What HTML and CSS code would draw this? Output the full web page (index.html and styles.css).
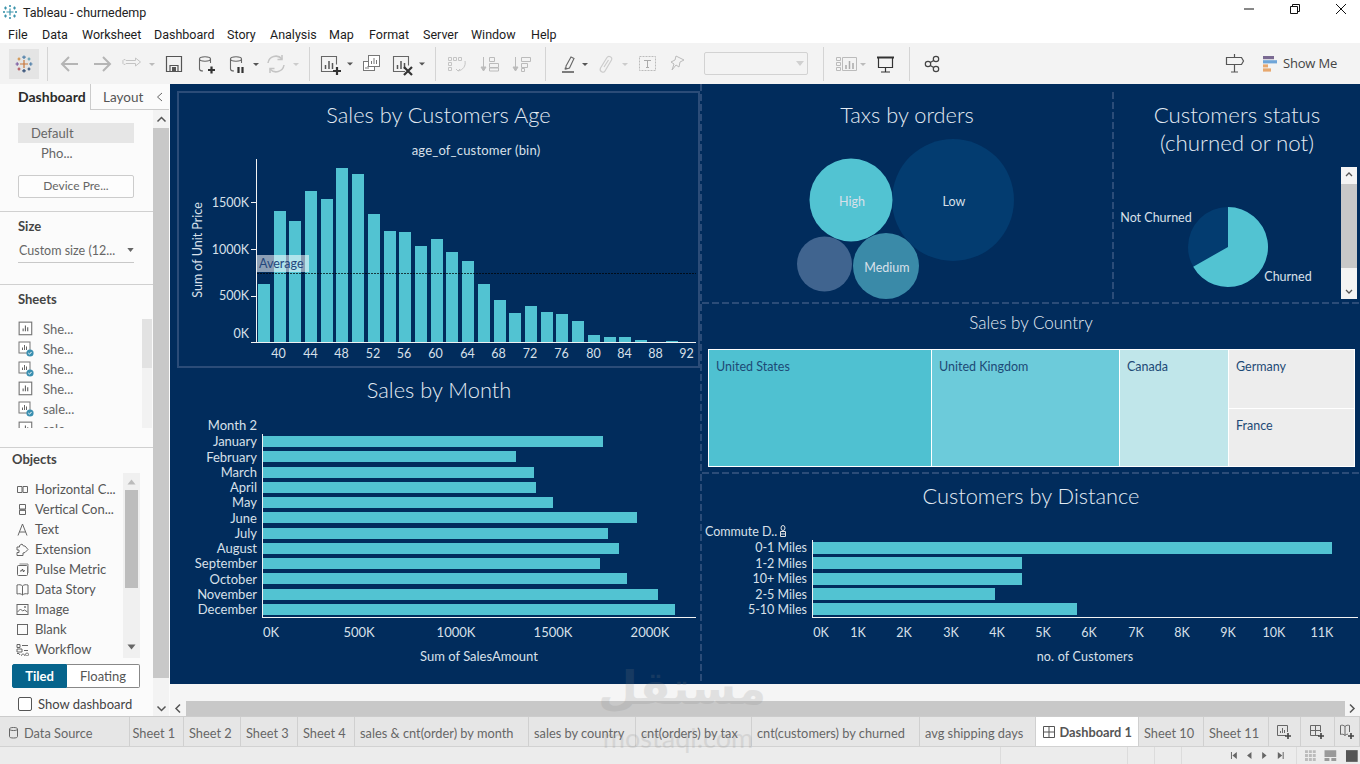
FILE: index.html
```html
<!DOCTYPE html>
<html lang="en">
<head>
<meta charset="utf-8">
<title>Tableau - churnedemp</title>
<link rel="stylesheet" href="styles.css">
</head>
<body>
<svg class="sprite" width="0" height="0">
  <defs>
    <symbol id="sheet" viewBox="0 0 14 14"><rect x="1" y="1" width="11" height="11" fill="#fff" stroke="#777"/><path d="M4.5 9V6.5M6.5 9V4M8.5 9V5.5" stroke="#666"/></symbol>
    <symbol id="sheetok" viewBox="0 0 16 16"><rect x="1" y="1" width="11" height="11" fill="#fff" stroke="#777"/><path d="M4.5 9V6.5M6.5 9V4M8.5 9V5.5" stroke="#666"/><circle cx="12" cy="12" r="3.6" fill="#3a8fb0"/><path d="M10.3 12l1.2 1.2 2.1-2.3" fill="none" stroke="#fff"/></symbol>
    <symbol id="car" viewBox="0 0 8 5"><path d="M0 0h8L4 5z" fill="currentColor"/></symbol>
  </defs>
</svg>

<header class="titlebar">
  <svg class="appicon" width="14" height="14" viewBox="0 0 14 14"><g stroke="#3a93ab" stroke-width="1.2" fill="none"><path d="M7 3.5v7M3.5 7h7"/><path d="M2.5 1.5v3M1 3h3M11.5 1.5v3M10 3h3M2.5 9.5v3M1 11h3M11.5 9.5v3M10 11h3"/><path d="M7 0v2M6 1h2M7 12v2M6 13h2M0 7h2M1 6v2M12 7h2M13 6v2"/></g></svg>
  <span class="apptitle">Tableau - churnedemp</span>
  <div class="winctl">
    <svg width="12" height="12" viewBox="0 0 12 12"><path d="M1 6h10" stroke="#111"/></svg>
    <svg width="12" height="12" viewBox="0 0 12 12"><path d="M1.5 3.5h7v7h-7zM3.5 3V1.5h7v7H9" fill="none" stroke="#111"/></svg>
    <svg width="12" height="12" viewBox="0 0 12 12"><path d="M1 1l10 10M11 1L1 11" stroke="#111"/></svg>
  </div>
</header>

<nav class="menubar">
  <span>File</span><span>Data</span><span>Worksheet</span><span>Dashboard</span><span>Story</span><span>Analysis</span><span>Map</span><span>Format</span><span>Server</span><span>Window</span><span>Help</span>
</nav>

<div class="toolbar">
  <div class="logobox">
    <svg width="18" height="18" viewBox="0 0 18 18" fill="none" stroke-width="1.2"><path d="M9 5v8M5 9h8" stroke="#c8763a"/><path d="M9 0.5v3.5M7.2 2.2h3.6" stroke="#4d7ea8"/><path d="M9 14v3.5M7.2 15.800h3.6" stroke="#2d4a73"/><path d="M0.500 9h3.500M2.200 7.200v3.600" stroke="#7a5aa0"/><path d="M14 9h3.5M15.800 7.200v3.600" stroke="#4d7ea8"/><path d="M4 2.500v3M2.500 4h3" stroke="#d08a3c"/><path d="M14 2.500v3M12.500 4h3" stroke="#5b9bb0"/><path d="M4 12.500v3M2.500 14h3" stroke="#b0474f"/><path d="M14 12.500v3M12.500 14h3" stroke="#2d4a73"/></svg>
  </div>
  <i class="sep first"></i>
  <svg class="tools" width="261" height="41" viewBox="48 43 261 41">
    <g fill="none" stroke="#b5b5b5" stroke-width="2">
      <path d="M78 64H63M69 57l-7 7 7 7"/><path d="M94 64h15M103 57l7 7-7 7"/>
    </g>
    <path d="M126 60.500h9.500V58l5 4-5 4v-2.500H126a1.500 1.500 0 0 1 -3 -1.500 1.500 1.500 0 0 1 3 -1.500z" fill="none" stroke="#c4c4c4"/>
    <path d="M149 63h6l-3 3z" fill="#bbb"/>
    <g fill="none" stroke="#555" stroke-width="1.200">
      <path d="M166.500 56.500h15v15h-15z"/><path d="M170 71.500v-6h8v6"/>
    </g>
    <rect x="172" y="67" width="4" height="4" fill="#555"/>
    <g fill="none" stroke="#666" stroke-width="1.100">
      <ellipse cx="205" cy="59" rx="5.500" ry="2.200"/><path d="M199.500 59v10c0 1 1.500 2 3.500 2M210.500 59v4"/>
      <ellipse cx="236" cy="59" rx="5.500" ry="2.200"/><path d="M230.500 59v10c0 1 1.500 2 3.500 2M241.500 59v4"/>
    </g>
    <path d="M208 70h7M211.500 66.500v7" stroke="#333" stroke-width="2.200"/>
    <path d="M238.500 67v6M242.500 67v6" stroke="#333" stroke-width="2.200"/>
    <path d="M253 63h6l-3 3z" fill="#555"/>
    <g fill="none" stroke="#c4c4c4" stroke-width="1.500"><path d="M268 63a8 8 0 0 1 14-4M284 65a8 8 0 0 1-14 4"/><path d="M282 55v4.500h-4.500M270 73v-4.500h4.500"/></g>
    <path d="M293 63h6l-3 3z" fill="#ccc"/>
  </svg>
  <i class="sep"></i>
  <svg class="tools" width="125" height="41" viewBox="310 43 125 41">
    <g fill="none" stroke="#666" stroke-width="1.100"><path d="M336 71.500h-14.500v-15h15v8"/></g>
    <path d="M325.500 69v-4M329 69v-8M332.500 69v-6" stroke="#555" stroke-width="1.500"/>
    <path d="M333 71h8M337 67v8" stroke="#333" stroke-width="2.200"/>
    <path d="M347 62.500h6l-3 3z" fill="#555"/>
    <g fill="#fff" stroke="#777"><rect x="363.500" y="61.500" width="11" height="9"/><rect x="368.500" y="55.500" width="11" height="11"/></g>
    <path d="M371.500 64v-3M374 64v-6M376.500 64v-4M366 69v-2M368 69v-3" stroke="#777"/>
    <g fill="none" stroke="#666" stroke-width="1.100"><path d="M405 71.500h-11.500v-15h15v9"/></g>
    <path d="M397.500 69v-4M401 69v-8M404.500 69v-6" stroke="#555" stroke-width="1.500"/>
    <path d="M404 67l8 8M412 67l-8 8" stroke="#333" stroke-width="2.200"/>
    <path d="M419 62.500h6l-3 3z" fill="#555"/>
  </svg>
  <i class="sep"></i>
  <svg class="tools" width="109" height="41" viewBox="436 43 109 41">
    <g fill="none" stroke="#c4c4c4">
      <path d="M448.500 57.500h3v3h-3zM453.500 57.500h3v3h-3zM458.500 57.500h3v3h-3zM448.500 62.500h3v3h-3zM448.500 67.500h3v3h-3z"/><path d="M465 61c1 5-2 9-7 10M456 69l2 2 2-2"/>
    </g>
    <g fill="none" stroke="#bbb"><path d="M483.500 57v13"/><path d="M489.500 57.500h5v4h-5zM489.500 63.500h9v4h-9z"/><path d="M489.500 68h9v3h-9z"/><path d="M481 67l2.500 4 2.500-4z" fill="#bbb"/></g>
    <g fill="none" stroke="#bbb"><path d="M515.500 57v13"/><path d="M521.500 57.500h9v4h-9zM521.500 63.500h6v4h-6zM521.500 68.500h3v3h-3z"/><path d="M513 67l2.500 4 2.500-4z" fill="#bbb"/></g>
  </svg>
  <i class="sep"></i>
  <svg class="tools" width="148" height="41" viewBox="546 43 148 41">
    <path d="M562 72h12" stroke="#555" stroke-width="1.500"/>
    <path d="M566 66l5-9 3 1.500-4.500 9.500-3.500 1zM565 69.500l.5-2" fill="none" stroke="#666" stroke-width="1.100"/>
    <path d="M582 63h6l-3 3z" fill="#555"/>
    <path d="M600.500 68L607 57.500c1.500-2.500 6-.5 4.500 2.500L605 71c-1.500 2.500-6 .5-4.500-3zM604 67l4.500-7" fill="none" stroke="#ccc" stroke-width="1.200"/>
    <path d="M622 63h6l-3 3z" fill="#ccc"/>
    <rect x="639.500" y="56.500" width="16" height="14" fill="none" stroke="#bbb" stroke-dasharray="2 1"/>
    <path d="M644 60.500h7M647.500 60.500v7M646 67.500h3" fill="none" stroke="#aaa"/>
    <path d="M676 56l8 4-4 2-1 5-3-2-4 5 2-6-3-2 4-2z" fill="none" stroke="#bbb"/>
  </svg>
  <div class="fieldbox"><svg width="8" height="5"><use href="#car"/></svg></div>
  <i class="sep"></i>
  <svg class="tools" width="85" height="41" viewBox="824 43 85 41">
    <g fill="none" stroke="#bbb"><path d="M836.500 57.500h4v3h-4zM836.500 62.500h4v3h-4zM836.500 67.500h4v3h-4zM842.500 57.500h14v13h-14z"/></g>
    <path d="M846 69v-4M849.500 69v-8M853 69v-6" stroke="#aaa" stroke-width="1.500"/>
    <path d="M860 63h6l-3 3z" fill="#bbb"/>
    <path d="M877 57.500h17" stroke="#333" stroke-width="2"/>
    <path d="M878.500 58v9.500h14V58M885.500 67.500V72M881 72h9" fill="none" stroke="#333" stroke-width="1.200"/>
  </svg>
  <i class="sep"></i>
  <svg class="tools" width="40" height="41" viewBox="910 43 40 41">
    <g fill="none" stroke="#444" stroke-width="1.200"><circle cx="936" cy="59" r="2.700"/><circle cx="936" cy="69" r="2.700"/><circle cx="928" cy="64" r="2.700"/><path d="M930.300 62.600l3.400-2.200M930.300 65.400l3.400 2.200"/></g>
  </svg>
  <div class="tool-right">
    <svg width="20" height="20" viewBox="0 0 20 20"><path d="M1.500 3.500h15l2 3.500-2 3.500h-15zM9.500 0v3.500M9.500 10.500V18M6 18h7" fill="none" stroke="#555" stroke-width="1.200"/></svg>
    <svg class="showme-ic" width="14" height="16" viewBox="0 0 14 16"><rect width="11" height="3.200" fill="#7a6a92"/><rect y="4.200" width="14" height="3.200" fill="#6fa5d8"/><rect y="8.400" width="5" height="3" fill="#e8a86e"/><rect y="12.400" width="8" height="3.200" fill="#e8a86e"/></svg>
    <span class="showme">Show Me</span>
  </div>
</div>

<main class="main">
  <aside class="side">
    <div class="side-tabs">
      <div class="stab on">Dashboard</div>
      <div class="stab lay"><span>Layout</span><svg width="7" height="10" viewBox="0 0 7 10"><path d="M6 1L1.500 5 6 9" fill="none" stroke="#666"/></svg></div>
    </div>
    <div class="side-body">
      <div class="side-panel">
        <section class="sec device">
          <div class="dev sel">Default</div>
          <div class="dev sub">Pho...</div>
          <div class="devbtn">Device Pre...</div>
        </section>
        <section class="sec size">
          <h3>Size</h3>
          <div class="sizesel"><span>Custom size (12...</span><svg width="7" height="4"><use href="#car"/></svg></div>
        </section>
        <section class="sec sheets">
          <h3>Sheets</h3>
          <div class="listwrap sheetlist">
            <ul class="items">
              <li><svg width="16" height="16"><use href="#sheet"/></svg><span>She...</span></li>
              <li><svg width="16" height="16"><use href="#sheetok"/></svg><span>She...</span></li>
              <li><svg width="16" height="16"><use href="#sheetok"/></svg><span>She...</span></li>
              <li><svg width="16" height="16"><use href="#sheet"/></svg><span>She...</span></li>
              <li><svg width="16" height="16"><use href="#sheetok"/></svg><span>sale...</span></li>
              <li><svg width="16" height="16"><use href="#sheet"/></svg><span>sale...</span></li>
            </ul>
            <div class="miniscroll"><div class="minithumb"></div></div>
          </div>
        </section>
        <section class="objects">
          <h3>Objects</h3>
          <div class="listwrap objlist">
            <ul class="items">
              <li><svg width="13" height="13" viewBox="0 0 13 13"><path d="M1.500 3.500h4.500v6h-4.500zM7 3.500h4.500v6H7z" fill="none" stroke="#666"/></svg><span>Horizontal C...</span></li>
              <li><svg width="13" height="13" viewBox="0 0 13 13"><path d="M3.500 1.500h6v4.500h-6zM3.500 7h6v4.500h-6z" fill="none" stroke="#666"/><rect x="3.500" y="6" width="6" height="2" fill="#777"/></svg><span>Vertical Con...</span></li>
              <li><svg width="13" height="13" viewBox="0 0 13 13"><path d="M2 12.500L6.500 1 11 12.500M3.500 9h6" fill="none" stroke="#666"/></svg><span>Text</span></li>
              <li><svg width="13" height="13" viewBox="0 0 13 13"><path d="M1 4h2.500V2.500L6 1l1.500 2H9l3 3.500L9 9.500 7 10v2.500H1V9.500h2V7H1z" fill="none" stroke="#666"/></svg><span>Extension</span></li>
              <li><svg width="13" height="13" viewBox="0 0 13 13"><rect x="1.500" y="2.500" width="10" height="10" rx="1" fill="none" stroke="#666"/><path d="M3.500 1h8.500v9" fill="none" stroke="#888"/><path d="M4 8h1.500l1-2 1 3 1-2" fill="none" stroke="#555"/></svg><span>Pulse Metric</span></li>
              <li><svg width="13" height="13" viewBox="0 0 13 13"><path d="M6.500 3C5 1.500 3 1.500 1 2v9c2-.5 4-.5 5.500 1 1.500-1.500 3.500-1.500 5.500-1V2c-2-.5-4-.5-5.500 1zM6.500 3v9" fill="none" stroke="#666"/></svg><span>Data Story</span></li>
              <li><svg width="13" height="13" viewBox="0 0 13 13"><rect x="1" y="1.500" width="11" height="10" fill="none" stroke="#666"/><path d="M1.500 9l3-3 2 2 2-1 3 2" fill="none" stroke="#666"/><circle cx="9" cy="4" r="1" fill="#777"/></svg><span>Image</span></li>
              <li><svg width="13" height="13" viewBox="0 0 13 13"><rect x="1.500" y="1.500" width="10" height="10" fill="none" stroke="#666"/></svg><span>Blank</span></li>
              <li><svg width="13" height="13" viewBox="0 0 13 13"><path d="M1 1.500h3v3H1zM6 2.500h6M1 6h5v3H1zM8 7.500h4M1 10.500h2l1 1.500M7 11a1.500 1.500 0 1 0 .1 0M11 10a1.500 1.500 0 1 0 .1 0" fill="none" stroke="#666"/></svg><span>Workflow</span></li>
            </ul>
            <div class="objscroll">
              <svg width="9" height="6" viewBox="0 0 9 6"><path d="M0.500 5.500h8L4.500 0.500z" fill="#bbb"/></svg>
              <div class="objthumb"></div>
              <svg class="objdown" width="9" height="6" viewBox="0 0 9 6"><path d="M0.500 0.500h8L4.500 5.500z" fill="#666"/></svg>
            </div>
          </div>
          <div class="segment"><span class="seg on">Tiled</span><span class="seg">Floating</span></div>
          <label class="showdash"><i class="check"></i><span>Show dashboard</span></label>
        </section>
      </div>
      <div class="vscroll">
        <svg width="11" height="7" viewBox="0 0 11 7"><path d="M1.500 5.500l4-4 4 4" fill="none" stroke="#555" stroke-width="1.500"/></svg>
        <div class="vthumb"></div>
        <svg width="11" height="7" viewBox="0 0 11 7"><path d="M1.500 1.500l4 4 4-4" fill="none" stroke="#555" stroke-width="1.500"/></svg>
      </div>
    </div>
  </aside>

  <div class="work">
    <div class="dash">
      <div class="col-left">
        <section class="p-age">
          <div class="frame">
            <h2 class="ptitle">Sales by Customers Age</h2>
            <svg class="chart" width="518" height="228" viewBox="179 137 518 228">
              <text class="ax lg mid wide" x="476" y="155">age_of_customer (bin)</text>
              <g class="bar">
                <rect x="258" y="284" width="12" height="58"/><rect x="274" y="211" width="12" height="131"/><rect x="289" y="221" width="12" height="121"/><rect x="305" y="191" width="12" height="151"/><rect x="321" y="199" width="12" height="143"/><rect x="336" y="168" width="12" height="174"/><rect x="352" y="174" width="12" height="168"/><rect x="368" y="214" width="12" height="128"/><rect x="384" y="231" width="12" height="111"/><rect x="399" y="232" width="12" height="110"/><rect x="415" y="246" width="12" height="96"/><rect x="431" y="239" width="12" height="103"/><rect x="446" y="252" width="12" height="90"/><rect x="462" y="261" width="12" height="81"/><rect x="478" y="284" width="12" height="58"/><rect x="494" y="300" width="12" height="42"/><rect x="509" y="313" width="12" height="29"/><rect x="525" y="306" width="12" height="36"/><rect x="541" y="312" width="12" height="30"/><rect x="556" y="314" width="12" height="28"/><rect x="572" y="321" width="12" height="21"/><rect x="588" y="335" width="12" height="7"/><rect x="604" y="337" width="12" height="5"/><rect x="619" y="337" width="12" height="5"/><rect x="635" y="340" width="12" height="2"/><rect x="666" y="341" width="12" height="1"/>
              </g>
              <path class="axis" d="M256.500 159v183M251 342.500h445M251 202.500h5M251 249.500h5M251 296.500h5"/>
              <rect class="reflabel" x="257" y="255" width="52" height="17"/>
              <path class="refline" d="M257 273.500h439"/>
              <text class="avg" x="259" y="268">Average</text>
              <g class="ax end">
                <text x="249" y="207">1500K</text><text x="249" y="254">1000K</text><text x="249" y="300">500K</text><text x="249" y="338">0K</text>
              </g>
              <text class="ax mid" transform="translate(202 250) rotate(-90)">Sum of Unit Price</text>
              <g class="ax mid">
                <text x="278.500" y="358">40</text><text x="310.500" y="358">44</text><text x="341.500" y="358">48</text><text x="373" y="358">52</text><text x="404" y="358">56</text><text x="435.500" y="358">60</text><text x="467.500" y="358">64</text><text x="498.500" y="358">68</text><text x="530" y="358">72</text><text x="561.500" y="358">76</text><text x="593.500" y="358">80</text><text x="624.500" y="358">84</text><text x="655.500" y="358">88</text><text x="686.500" y="358">92</text>
              </g>
            </svg>
          </div>
        </section>
        <section class="p-month">
          <h2 class="ptitle shift">Sales by Month</h2>
          <svg class="chart" width="530" height="272" viewBox="170 412 530 272">
            <g class="bar">
              <rect x="262" y="436" width="341" height="11"/><rect x="262" y="451" width="254" height="11"/><rect x="262" y="467" width="272" height="11"/><rect x="262" y="482" width="274" height="11"/><rect x="262" y="497" width="291" height="11"/><rect x="262" y="512" width="375" height="11"/><rect x="262" y="528" width="346" height="11"/><rect x="262" y="543" width="357" height="11"/><rect x="262" y="558" width="338" height="11"/><rect x="262" y="573" width="365" height="11"/><rect x="262" y="589" width="396" height="11"/><rect x="262" y="604" width="413" height="11"/>
            </g>
            <path class="axis" d="M262.500 434v183M262 617.500h434"/>
            <g class="ax lg end">
              <text x="257" y="430">Month 2</text><text x="257" y="446">January</text><text x="257" y="462">February</text><text x="257" y="477">March</text><text x="257" y="492">April</text><text x="257" y="507">May</text><text x="257" y="523">June</text><text x="257" y="538">July</text><text x="257" y="553">August</text><text x="257" y="568">September</text><text x="257" y="584">October</text><text x="257" y="599">November</text><text x="257" y="614">December</text>
            </g>
            <g class="ax lg mid">
              <text x="271" y="637">0K</text><text x="359" y="637">500K</text><text x="456" y="637">1000K</text><text x="553" y="637">1500K</text><text x="650" y="637">2000K</text><text x="479" y="661">Sum of SalesAmount</text>
            </g>
          </svg>
        </section>
      </div>
      <div class="col-right">
        <div class="row-top">
          <section class="p-tax">
            <h2 class="ptitle">Taxs by orders</h2>
            <svg class="chart" width="410" height="165" viewBox="702 137 410 165">
              <circle cx="953" cy="200" r="61" fill="#033c70"/>
              <circle cx="851" cy="200" r="41.500" fill="#52c3d2"/>
              <circle cx="824.500" cy="264" r="27.500" fill="#40648f"/>
              <circle cx="886" cy="266" r="33" fill="#3a8aa8"/>
              <g class="ax mid lbl">
                <text x="852" y="206">High</text><text x="954" y="206">Low</text><text x="887" y="272">Medium</text>
              </g>
            </svg>
          </section>
          <section class="p-status">
            <h2 class="ptitle two">Customers status<br>(churned or not)</h2>
            <svg class="chart" width="244" height="145" viewBox="1114 157 244 145">
              <circle cx="1228" cy="247" r="40" fill="#033c70"/>
              <path d="M1228 247V207A40 40 0 1 1 1193.200 266.700Z" fill="#52c3d2"/>
              <g class="ax lbl">
                <text class="mid" x="1156" y="222">Not Churned</text><text class="mid" x="1288" y="281">Churned</text>
              </g>
              <rect x="1341" y="167" width="16" height="132" fill="#f4f4f4"/>
              <rect x="1341" y="184" width="16" height="84" fill="#c8c8c8"/>
              <path d="M1346 176l3-3 3 3M1346 290l3 3 3-3" fill="none" stroke="#555" stroke-width="1.300"/>
            </svg>
          </section>
        </div>
        <section class="p-country">
          <h2 class="ptitle small">Sales by Country</h2>
          <div class="treemap">
            <div class="cell us">United States</div>
            <div class="cell uk">United Kingdom</div>
            <div class="cell ca">Canada</div>
            <div class="cell de">Germany</div>
            <div class="cell fr">France</div>
          </div>
        </section>
        <section class="p-dist">
          <h2 class="ptitle">Customers by Distance</h2>
          <svg class="chart" width="658" height="166" viewBox="702 518 658 166">
            <g class="bar">
              <rect x="812" y="542" width="520" height="12"/><rect x="812" y="557" width="210" height="12"/><rect x="812" y="573" width="210" height="12"/><rect x="812" y="588" width="183" height="12"/><rect x="812" y="603" width="265" height="12"/>
            </g>
            <path class="axis" d="M812.500 540v77M812 617.500h546"/>
            <text class="ax" x="705" y="536">Commute D..</text>
            <g fill="none" stroke="#e4e4e4"><ellipse cx="783" cy="528" rx="2" ry="2.500"/><path d="M780.500 531.500h5v5h-5zM780.500 534h5"/></g>
            <g class="ax end">
              <text x="807" y="552">0-1 Miles</text><text x="807" y="568">1-2 Miles</text><text x="807" y="583">10+ Miles</text><text x="807" y="599">2-5 Miles</text><text x="807" y="614">5-10 Miles</text>
            </g>
            <g class="ax mid">
              <text x="821" y="637">0K</text><text x="858" y="637">1K</text><text x="904" y="637">2K</text><text x="951" y="637">3K</text><text x="997" y="637">4K</text><text x="1043" y="637">5K</text><text x="1089" y="637">6K</text><text x="1136" y="637">7K</text><text x="1182" y="637">8K</text><text x="1228" y="637">9K</text><text x="1274" y="637">10K</text><text x="1322" y="637">11K</text><text class="wide" x="1085" y="661">no. of  Customers</text>
            </g>
          </svg>
        </section>
      </div>
    </div>
    <div class="hscroll">
      <svg width="16" height="15" viewBox="0 0 16 15"><path d="M10 3.500l-4 4 4 4" fill="none" stroke="#555" stroke-width="1.500"/></svg>
      <div class="hthumb"></div>
      <svg width="15" height="15" viewBox="0 0 15 15"><path d="M5 3.500l4 4-4 4" fill="none" stroke="#555" stroke-width="1.500"/></svg>
    </div>
  </div>
</main>

<div class="tabs">
  <div class="tab ds"><svg width="11" height="13" viewBox="0 0 11 13"><path d="M1.500 3v7.500c0 1 1.500 1.500 4 1.500s4-.5 4-1.500V3M1.500 3c0-1 1.500-1.500 4-1.500s4 .5 4 1.500-1.500 1.500-4 1.500-4-.5-4-1.500z" fill="none" stroke="#666"/></svg>Data Source</div>
  <div class="tab s1">Sheet 1</div>
  <div class="tab">Sheet 2</div>
  <div class="tab">Sheet 3</div>
  <div class="tab">Sheet 4</div>
  <div class="tab">sales &amp; cnt(order) by month</div>
  <div class="tab">sales by country</div>
  <div class="tab">cnt(orders) by tax</div>
  <div class="tab">cnt(customers) by churned</div>
  <div class="tab">avg shipping days</div>
  <div class="tab active"><svg width="12" height="12" viewBox="0 0 12 12"><path d="M.5.500h11v11H.5zM6 .5v11M.5 6h11" fill="none" stroke="#555"/></svg>Dashboard 1</div>
  <div class="tab">Sheet 10</div>
  <div class="tab">Sheet 11</div>
  <div class="tab ico"><svg width="16" height="16" viewBox="0 0 16 16"><path d="M10 11.500H1.500v-10h10V8" fill="none" stroke="#666"/><path d="M4.500 9V7M6.500 9V4M8.500 9V6" stroke="#666"/><path d="M9 12h6M12 9v6" stroke="#444" stroke-width="1.600"/></svg></div>
  <div class="tab ico"><svg width="16" height="16" viewBox="0 0 16 16"><path d="M10 11.500H1.500v-10h10V8M6.500 1.500v10M1.500 6.500h10" fill="none" stroke="#666"/><path d="M9 12h6M12 9v6" stroke="#444" stroke-width="1.600"/></svg></div>
  <div class="tab ico"><svg width="16" height="16" viewBox="0 0 16 16"><path d="M6 2.500C4.500 1 3 1 1.500 1.500v9c1.500-.5 3-.5 4.500 1 1-1 2-1.300 3-1.300M6 2.500C7.500 1 9 1 10.500 1.500V8M6 2.500v9" fill="none" stroke="#666"/><path d="M9 12h6M12 9v6" stroke="#444" stroke-width="1.600"/></svg></div>
</div>

<footer class="status">
  <i class="sline a"></i><i class="sline"></i><i class="sline"></i><i class="sline"></i>
  <svg class="pager" width="64" height="11" viewBox="0 0 64 11"><g fill="#666"><path d="M2 2h1v7H2zM8 2v7L3.500 5.500zM23 2v7L18.500 5.500zM34 2v7l4.500-3.500zM50 2v7l4.500-3.500zM55 2h1v7h-1z"/></g></svg>
  <i class="sline b"></i>
  <svg class="views" width="56" height="12" viewBox="0 0 56 12"><g fill="#bbb"><path d="M0 0h3v3H0zM4 0h3v3H4zM8 0h3v3H8zM0 4h3v3H0zM4 4h3v3H4zM8 4h3v3H8zM0 8h3v3H0zM4 8h3v3H4zM8 8h3v3H8z"/></g><path d="M20 0h12v7H20zM20 8h5v3h-5zM27 8h5v3h-5z" fill="#999"/><rect x="42" y="0" width="12" height="12" fill="#555"/></svg>
</footer>

<div class="watermark" aria-hidden="true">
  <div class="wm-ar">مستقل</div>
  <div class="wm-en">mostaql.com</div>
</div>
</body>
</html>
```
FILE: styles.css
```css
* { box-sizing: border-box; }
html, body { margin: 0; padding: 0; }
body {
  width: 1360px; height: 764px; overflow: hidden; position: relative;
  background: #fff; color: #333;
  font-family: "Lato", "Open Sans", sans-serif;
  display: flex; flex-direction: column;
}
.sprite { display: block; height: 0; width: 0; overflow: hidden; }
h2, h3, ul { margin: 0; padding: 0; }
ul { list-style: none; }

/* window chrome */
.titlebar { height: 22px; display: flex; align-items: center; padding-left: 3px; flex: none; padding-top: 2px; }
.appicon { flex: none; }
.apptitle { margin-left: 6px; font: 12.5px "Roboto", sans-serif; color: #222; }
.winctl { margin-left: auto; display: flex; gap: 34px; padding-right: 13px; margin-top: -6px; }
.menubar { height: 21px; flex: none; padding: 3px 0 0 8px; display: grid; align-items: center; grid-template-columns: 34px 40px 72px 73px 43px 59px 40px 54px 48px 60px 40px; font: 12.5px "Roboto", sans-serif; color: #1c1c1c; }

/* toolbar */
.toolbar { height: 41px; flex: none; background: #f3f3f3; display: flex; align-items: center; padding-left: 9px; }
.logobox { width: 30px; height: 30px; background: #e4e4e4; display: flex; align-items: center; justify-content: center; flex: none; }
.sep { width: 1px; height: 34px; background: #d4d4d4; flex: none; }
.sep.first { margin-left: 8px; }
.tools { flex: none; display: block; }
.fieldbox { width: 104px; height: 23px; margin-left: 10px; margin-right: 15px; flex: none; border: 1px solid #d2d2d2; border-radius: 2px; display: flex; align-items: center; justify-content: flex-end; padding-right: 3px; color: #d0d0d0; }
.tool-right { margin-left: auto; display: flex; align-items: center; padding-right: 23px; }
.showme-ic { margin-left: 18px; }
.showme { margin-left: 6px; margin-top: -2px; font: 13px "Open Sans", sans-serif; color: #444; letter-spacing: -.2px; }

/* main */
.main { height: 632px; flex: none; display: flex; background: #f5f5f5; }
.side { width: 170px; flex: none; display: flex; flex-direction: column; background: #fbfbfb; }
.side-tabs { height: 26px; flex: none; display: flex; }
.stab { font-size: 13.5px; line-height: 26px; color: #333; }
.stab.on { width: 90px; padding-left: 18px; font-size: 14px; font-weight: 700; color: #2b2b2b; }
.stab.lay { width: 79px; border-left: 1px solid #ccc; border-bottom: 1px solid #ccc; padding-left: 12px; display: flex; align-items: center; gap: 13px; color: #555; }
.side-body { flex: 1; display: flex; min-height: 0; }
.side-panel { width: 153px; flex: none; display: flex; flex-direction: column; }
.sec { border-bottom: 1px solid #d0d0d0; flex: none; }
.sec h3, .objects h3 { font-size: 13px; font-weight: 700; color: #444; line-height: 16px; }
.device { height: 102px; padding: 13px 19px 0 18px; }
.dev { height: 20px; font-size: 13px; line-height: 20px; color: #666; padding-left: 13px; }
.dev.sel { background: #e6e6e6; }
.dev.sub { padding-left: 23px; }
.devbtn { height: 23px; margin-top: 12px; border: 1px solid #ccc; border-radius: 2px; background: #fdfdfd; text-align: center; font-size: 12px; line-height: 19px; color: #666; }
.size { height: 73px; padding: 6px 19px 0 18px; }
.sizesel { margin-top: 7px; height: 22px; border-bottom: 1px solid #c8c8c8; display: flex; align-items: center; justify-content: space-between; font-size: 12.5px; color: #666; padding: 0 0 3px 1px; }
.sizesel svg { color: #666; }
.sheets { height: 163px; padding: 6px 0 0 18px; }
.sheetlist { margin-top: 12px; height: 109px; }
.listwrap { display: flex; overflow: hidden; }
.items { flex: 1; min-width: 0; }
.items li { height: 20px; display: flex; align-items: center; font-size: 13px; color: #666; }
.sheetlist .items svg { margin-right: 9px; flex: none; }
.miniscroll { width: 10px; margin-right: 1px; background: #f2f2f2; flex: none; height: 109px; }
.minithumb { height: 49px; background: #e2e2e2; }
.objects { flex: 1; padding: 3px 13px 0 12px; }
.objlist { margin-top: 6px; height: 185px; }
.objlist .items { padding: 6px 0 0 4px; overflow: hidden; }
.objlist .items svg { margin-right: 6px; flex: none; }
.objlist .items li { font-size: 13px; color: #555; white-space: nowrap; }
.objscroll { width: 17px; flex: none; background: #f0f0f0; display: flex; flex-direction: column; align-items: center; padding-top: 6px; }
.objthumb { width: 13px; height: 98px; background: #bdbdbd; margin-top: 5px; }
.objdown { margin-top: 56px; }
.segment { margin-top: 6px; height: 24px; display: flex; font-size: 13px; line-height: 22px; }
.seg { width: 73px; text-align: center; background: #fff; border: 1px solid #888; border-left: 0; border-radius: 0 2px 2px 0; color: #555; }
.seg.on { width: 55px; background: #06648c; color: #fff; font-weight: 700; border: 1px solid #06648c; border-radius: 2px 0 0 2px; }
.showdash { margin: 9px 0 0 6px; display: flex; align-items: center; gap: 6px; font-size: 13px; color: #444; height: 14px; white-space: nowrap; }
.check { width: 14px; height: 14px; border: 1px solid #555; border-radius: 2px; background: #fff; flex: none; }
.vscroll { width: 16px; flex: none; background: #f3f3f3; display: flex; flex-direction: column; align-items: center; padding-top: 6px; }
.vthumb { width: 16px; height: 550px; background: #c8c8c8; margin: 5px 0 27px; }

/* dashboard */
.work { flex: 1; min-width: 0; display: flex; flex-direction: column; }
.dash { height: 600px; flex: none; background: #012c5c; display: grid; grid-template-columns: 530px 660px; color: #e4eaf2; }
.ptitle { font-weight: 300; font-size: 21.8px; line-height: 28px; color: #e3ebf3; text-align: center; padding: 8px 0; }
.ptitle.shift { padding-left: 8px; }
.ptitle.two { padding: 0; font-size: 22.3px; }
.ptitle.small { font-size: 17px; font-weight: 300; line-height: 22px; }
.chart { display: block; }
.col-left { display: flex; flex-direction: column; }
.p-age { height: 284px; padding: 7px 0 0 7px; }
.frame { width: 523px; height: 277px; border: 2px solid #2b4c78; }
.p-month { height: 316px; }
.col-right { padding-left: 2px; display: flex; flex-direction: column; background: repeating-linear-gradient(180deg, #2b4c78 0 7px, transparent 7px 10px) 0 0 / 2px 100% no-repeat; }
.row-top, .p-country { background: repeating-linear-gradient(90deg, #2b4c78 0 7px, transparent 7px 10px) 0 100% / 100% 2px no-repeat; }
.row-top { height: 220px; flex: none; display: flex; padding: 9px 0 2px; }
.p-tax { width: 410px; flex: none; }
.p-status { flex: 1; padding: 9px 0 0 2px; margin-top: -1px; background: repeating-linear-gradient(180deg, #2b4c78 0 7px, transparent 7px 10px) 0 0 / 2px 100% no-repeat; }
.p-country { height: 170px; flex: none; }
.p-country .ptitle { padding: 8px 0 9px; }
.treemap { margin: 6px 0 0 6px; width: 647px; height: 118px; background: #fff; padding: 1px; display: grid; gap: 1px; grid-template-columns: 222px 187px 108px 125px; grid-template-rows: 58px 57px; }
.cell { font-size: 12.5px; color: #1d4a76; padding: 9px 7px; }
.us { background: #4fc1d1; grid-row: span 2; }
.uk { background: #6ccbda; grid-row: span 2; }
.ca { background: #c0e6ea; grid-row: span 2; }
.de, .fr { background: #ededed; }
.p-dist { flex: 1; min-height: 0; }

/* chart parts */
.bar { fill: #52c3d2; }
.axis { fill: none; stroke: #f2f2f2; stroke-width: 1; }
.ax { font-family: "Lato", sans-serif; font-size: 12.5px; fill: #d8e0ea; }
.ax.lg { font-size: 13px; }
.wide { letter-spacing: .2px; }
.mid, .mid text { text-anchor: middle; }
.end text { text-anchor: end; }
.refline { stroke: #000; stroke-opacity: .7; stroke-dasharray: 2 1; stroke-width: 1; fill: none; }
.reflabel { fill: #fff; fill-opacity: .55; }
.avg { font-family: "Lato", sans-serif; font-size: 12.5px; fill: #24477c; }

/* horizontal scroll under canvas */
.hscroll { margin-top: 17px; height: 15px; display: flex; align-items: center; }
.hthumb { flex: 1; height: 15px; background: #c8c8c8; }

/* sheet tabs */
.tabs { height: 31px; flex: none; background: #e6e6e6; border-top: 1px solid #ccc; border-bottom: 1px solid #d2d2d2; display: grid; grid-template-columns: 130px 53.5px 57px 57px 57px 174px 107px 116px 168px 116px 103px 65px 65px 32px 34px 25px; }
.tab { display: flex; align-items: center; padding: 2px 0 0 5.5px; gap: 5px; font-size: 12.8px; color: #666; border-right: 1px solid #d0d0d0; white-space: nowrap; overflow: hidden; }
.tab.ds { padding-left: 8px; }
.tab.s1 { padding-left: 2.5px; }
.tab.active { background: #fff; font-weight: 700; color: #555; padding: 0 0 0 7px; }
.tab.ico { padding: 0; justify-content: center; }

/* status */
.status { flex: 1; background: #ececec; display: flex; align-items: center; padding-left: 1000px; }
.sline { width: 1px; height: 100%; background: #dcdcdc; margin-right: 26px; }
.sline.a { margin-right: 126px; }
.sline.b { margin: 0 8px 0 5px; }
.pager { margin-left: 21px; }

/* watermark overlays the whole window */
.watermark { position: absolute; left: 598px; top: 665px; width: 160px; text-align: center; color: #808080; opacity: .17; pointer-events: none; line-height: 1; white-space: nowrap; }
.wm-ar { font: 700 46px/1 "DejaVu Sans", sans-serif; height: 52px; }
.wm-en { font: 400 27px/1 "Lato", sans-serif; margin-top: 7px; }
```
